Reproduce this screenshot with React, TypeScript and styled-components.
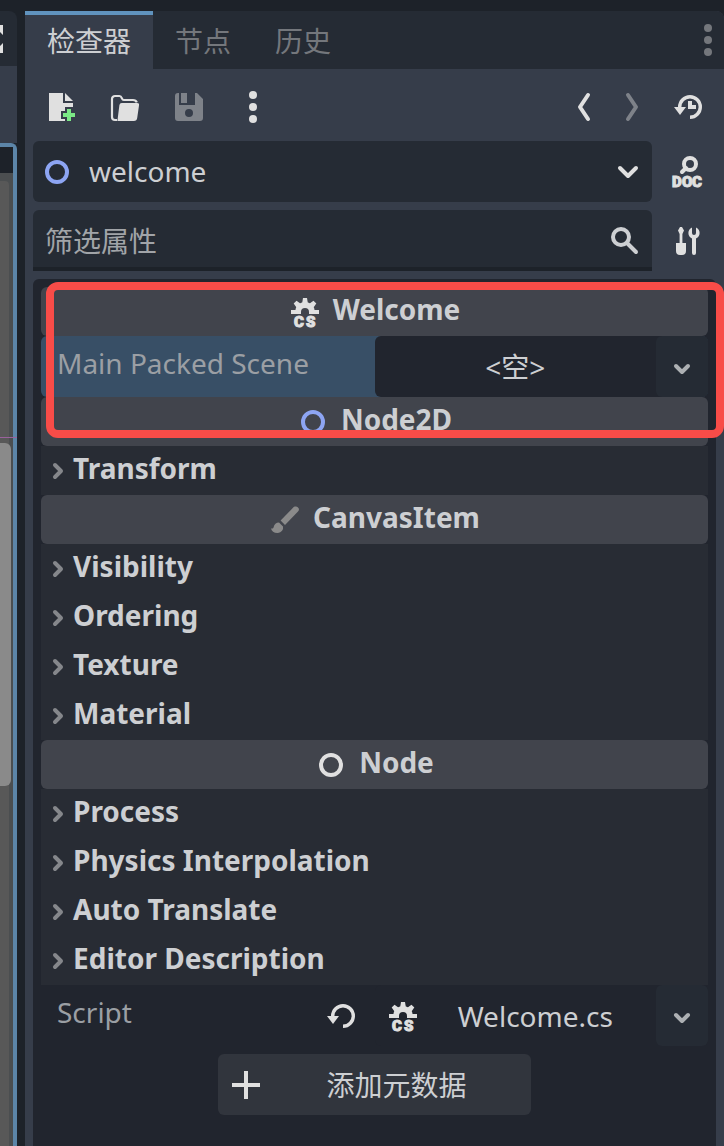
import React from "react";
import styled, { createGlobalStyle } from "styled-components";

const c = {
  base: "#1d2229",
  bar: "#252b34",
  panel: "#363d4a",
  well: "#21252e",
  section: "#282c34",
  category: "#41444c",
  accent: "#6093be",
  focus: "#5c85a8",
  picked: "#384f66",
  text: "#cdcfd2",
  muted: "#9b9fa4",
  faint: "#74777c",
  icon: "#e0e0e0",
  node2d: "#8da5f3",
  mark: "#f84c48",
};

const GlobalStyle = createGlobalStyle`
  *, *::before, *::after { box-sizing: border-box; }
  body {
    margin: 0;
    background: ${c.base};
    color: ${c.text};
    font: 400 28px/38px "Noto Sans", "Noto Sans CJK SC", sans-serif;
  }
  button, input, select {
    margin: 0;
    padding: 0;
    border: 0;
    border-radius: 0;
    outline: 0;
    background: none;
    color: inherit;
    font: inherit;
  }
  button { cursor: pointer; }
  svg { display: block; flex: none; overflow: visible; }
`;

/* ---------- page frame ---------- */

const Page = styled.div`
  display: flex;
  gap: 8px;
  min-height: 100vh;
  padding-top: 11px;
  overflow: hidden;
`;

const Strip = styled.aside`
  display: flex;
  flex: none;
  flex-direction: column;
  width: 17px;
`;

const StripHead = styled.div`
  display: flex;
  align-items: center;
  height: 55px;
  border-top-right-radius: 8px;
  background: ${c.bar};
`;

const StripTools = styled.div`
  height: 77px;
  background: ${c.panel};
`;

const Viewport = styled.div`
  position: relative;
  display: flex;
  flex: 1;
  flex-direction: column;
  border: solid ${c.focus};
  border-width: 4px 4px 0 0;
  border-top-right-radius: 6px;
  background: #4b4e50;
`;

const Ruler = styled.div`
  height: 26px;
  background: ${c.base};
`;

const Track = styled.div`
  flex: 1;
  width: 9px;
  margin-top: 8px;
  border-top-right-radius: 4px;
  background: #585858;
`;

const Thumb = styled.div`
  width: 11px;
  height: 343px;
  margin-top: 262px;
  border-radius: 0 6px 6px 0;
  background: #8a8a8a;
`;

const Guide = styled.div`
  position: absolute;
  top: 290px;
  left: 0;
  right: -4px;
  height: 1px;
  background: #9a629c;
`;

const Dock = styled.main`
  display: flex;
  flex: 1;
  flex-direction: column;
  min-width: 0;
  border-top-right-radius: 8px;
  background: ${c.panel};
`;

/* ---------- tabs and toolbar ---------- */

const TabBar = styled.div`
  display: flex;
  height: 58px;
  border-top-right-radius: 8px;
  background: ${c.bar};
`;

const Tab = styled.button<{ $active?: boolean }>`
  padding: ${(p) => (p.$active ? "0 22px 2px" : "2px 22px 0")};
  border-top: ${(p) => (p.$active ? `4px solid ${c.accent}` : "0")};
  background: ${(p) => (p.$active ? c.panel : "transparent")};
  color: ${(p) => (p.$active ? c.text : c.faint)};
`;

const Spacer = styled.div`
  flex: 1;
`;

const Body = styled.div`
  display: flex;
  flex: 1;
  flex-direction: column;
  gap: 8px;
  padding: 12px 8px 0;
`;

const Row = styled.div`
  display: flex;
  gap: 8px;
`;

const IconButton = styled.button<{ $narrow?: boolean; $bare?: boolean }>`
  display: flex;
  align-items: center;
  justify-content: center;
  flex: none;
  width: ${(p) => (p.$bare ? 32 : p.$narrow ? 40 : 56)}px;
  min-height: 52px;
  color: ${c.icon};
  &:disabled { color: #7e8289; }
`;

const Field = styled.label<{ $line?: boolean }>`
  display: flex;
  flex: 1;
  align-items: center;
  min-width: 0;
  height: 61px;
  padding: ${(p) => (p.$line ? "4px 12px 0" : "0 12px 0 8px")};
  border-bottom: ${(p) => (p.$line ? `4px solid ${c.base}` : "0")};
  border-radius: ${(p) => (p.$line ? "6px 6px 0 0" : "6px")};
  background: ${c.bar};
`;

const NodeSelect = styled.select`
  flex: 1;
  min-width: 0;
  height: 38px;
  margin: 0 0 2px 16px;
  appearance: none;
`;

const Search = styled.input`
  flex: 1;
  min-width: 0;
  height: 38px;
  &::placeholder { color: #a1a4a8; opacity: 1; }
`;

/* ---------- property list ---------- */

const Inspector = styled.section`
  position: relative;
  flex: 1;
  padding: 8px 8px 31px;
  border-radius: 6px 6px 0 0;
  background: ${c.well};
`;

const Category = styled.h2`
  display: flex;
  align-items: center;
  justify-content: center;
  gap: 12px;
  height: 49px;
  margin: 0;
  border-radius: 6px;
  background: ${c.category};
  font-size: 28px;
  font-weight: 700;
`;

const Title = styled.span`
  padding-bottom: 6px;
`;

const Section = styled.button`
  display: flex;
  align-items: center;
  gap: 4px;
  width: 100%;
  height: 49px;
  padding-left: 4px;
  background: ${c.section};
  color: ${c.text};
  font-weight: 700;
  text-align: left;
`;

const Property = styled.div<{ $picked?: boolean }>`
  display: grid;
  grid-template-columns: 1fr 1fr;
  height: 61px;
  border-radius: 6px;
  background: ${(p) => (p.$picked ? c.picked : "transparent")};
`;

const PropertyName = styled.div`
  display: flex;
  align-items: center;
  justify-content: space-between;
  padding: 0 18px 0 16px;
  color: ${c.muted};
`;

const PropertyLabel = styled.span`
  padding-bottom: 8px;
`;

const PropertyValue = styled.div`
  display: flex;
  min-width: 0;
  border-radius: 6px;
  background: ${c.well};
`;

const Resource = styled.button`
  display: flex;
  flex: 1;
  align-items: center;
  gap: 8px;
  min-width: 0;
  padding: 0 12px;
`;

const Centered = styled.span`
  flex: 1;
  text-align: center;
`;

const MoreButton = styled.button`
  display: flex;
  align-items: center;
  justify-content: center;
  width: 52px;
  padding-top: 4px;
  border-radius: 6px;
  background: ${c.bar};
  color: #adb0b3;
`;

const ResetButton = styled.button`
  color: ${c.icon};
`;

const AddButton = styled.button`
  display: flex;
  align-items: center;
  gap: 12px;
  width: 313px;
  height: 61px;
  margin: 8px auto 0;
  padding: 0 12px;
  border-radius: 6px;
  background: #31353d;
`;

const Highlight = styled.div`
  position: absolute;
  top: 3px;
  left: 13px;
  right: -8px;
  height: 156px;
  border: 8px solid ${c.mark};
  border-radius: 12px;
  pointer-events: none;
`;

/* ---------- icons, drawn on a 16 unit grid ---------- */

type IconProps = { children: React.ReactNode; color?: string };

const Icon = ({ children, color = "currentColor" }: IconProps) => (
  <svg width="32" height="32" viewBox="0 0 16 16" fill={color} aria-hidden="true">
    {children}
  </svg>
);

const NewIcon = () => (
  <Icon>
    <path d="M2 1v14h8v-1H8v-4h2V8h4V6H9V1zm8 0v4h4z" />
    <path fill="#7be986" d="M11 9v2H9v2h2v2h2v-2h2v-2h-2V9z" />
  </Icon>
);

const LoadIcon = () => (
  <Icon>
    <path
      d="M4 14.5H3A1.5 1.5 0 0 1 1.5 13V4A1.5 1.5 0 0 1 3 2.5h2.2c1.5 0 .9 2 2.2 2H12c1 0 1.6.4 1.9 1.2"
      fill="none"
      stroke="currentColor"
      strokeWidth="1.1"
    />
    <path d="M6.4 6H14a1 1 0 0 1 1 1.2l-.9 6.300A1.7 1.7 0 0 1 12.400 15H4.200L5.200 7a1.2 1.2 0 0 1 1.200-1z" />
  </Icon>
);

const SaveIcon = () => (
  <Icon>
    <path
      fillRule="evenodd"
      d="M2.500 1H3v6h8V1h1l3 3v9.500a1.500 1.500 0 0 1-1.500 1.500h-11A1.500 1.500 0 0 1 1 13.500v-11A1.500 1.500 0 0 1 2.500 1zM4 1h3v5H4zm4 8a2 2 0 0 0 0 4 2 2 0 0 0 0-4z"
    />
  </Icon>
);

const DotsIcon = ({ color }: { color?: string }) => (
  <Icon color={color}>
    <circle cx="8" cy="2" r="2" />
    <circle cx="8" cy="8" r="2" />
    <circle cx="8" cy="14" r="2" />
  </Icon>
);

const ArrowIcon = ({ forward }: { forward?: boolean }) => (
  <svg width="16" height="32" viewBox="0 0 16 32" fill="none" stroke="currentColor" strokeWidth="4" strokeLinecap="round" strokeLinejoin="round" aria-hidden="true">
    <path d={forward ? "M4 4l8 12-8 12" : "M12 4L4 16l8 12"} />
  </svg>
);

const REWIND = "M9 2a6 6 0 0 0-6 6H1l3 4 3-4H4.700A4.300 4.300 0 1 1 9 12.300V14A6 6 0 0 0 9 2z";

const HistoryIcon = () => (
  <Icon>
    <path d={REWIND} />
    <path d="M8 5v4h4V7h-2V5z" />
  </Icon>
);

const ResetIcon = () => (
  <Icon>
    <path d={REWIND} />
  </Icon>
);

const RingIcon = ({ color }: { color: string }) => (
  <Icon color="none">
    <circle cx="8" cy="8" r="5" stroke={color} strokeWidth="2" />
  </Icon>
);

const IconLetters = styled.text`
  font: 900 15px/1 Roboto, sans-serif;
  stroke: currentColor;
  stroke-width: 1px;
`;

const DocIcon = () => (
  <svg width="32" height="34" viewBox="0 0 32 34" fill="currentColor" aria-hidden="true">
    <path d="M14 13l-4 4" stroke="currentColor" strokeWidth="4" strokeLinecap="round" />
    <circle cx="18" cy="9" r="6" fill="none" stroke="currentColor" strokeWidth="4" />
    <IconLetters x="0 10 20" y="32">DOC</IconLetters>
  </svg>
);

const ToolsIcon = () => (
  <Icon>
    <path d="M4 1h1l1 1.800L5.200 4.500V9H7v4a2 2 0 0 1-2 2H4a2 2 0 0 1-2-2V9h1.800V4.500L3 2.800z" />
    <path d="M10 1.200V4a1 1 0 0 0 2 0V1.200A3 3 0 0 1 12 6.700V14a1 1 0 0 1-2 0V6.700a3 3 0 0 1 0-5.500z" />
  </Icon>
);

const SearchIcon = () => (
  <Icon color="none">
    <circle cx="6.500" cy="6" r="4" stroke={c.text} strokeWidth="2" />
    <path d="M9.500 9l4.500 4.500" stroke={c.text} strokeWidth="2" strokeLinecap="round" />
  </Icon>
);

const ScriptIcon = () => (
  <svg width="32" height="32" viewBox="0 0 32 32" fill={c.icon} color={c.icon} aria-hidden="true">
    <path d="M6 18v-2a10 10 0 0 1 20 0v2h-6v-2a4 4 0 0 0-8 0v2z" />
    <path d="M2 14h6v4H2zM24 14h6v4h-6z" />
    <path d="M13 8l1-6h4l1 6z" />
    <path d="M13 8l1-6h4l1 6z" transform="rotate(-45 16 16)" />
    <path d="M13 8l1-6h4l1 6z" transform="rotate(45 16 16)" />
    <IconLetters x="5 17" y="31">CS</IconLetters>
  </svg>
);

const BrushIcon = () => (
  <Icon color="#8a8a8a">
    <path d="M13 1.300a1.500 1.500 0 0 1 1.500 2.500L8 10.500 5.800 8.300l6.300-6.500a1.500 1.500 0 0 1 .9-.5z" />
    <path d="M5 9.200l2 2a2.700 2.700 0 0 1-2.500 3.300C2.500 14.600 1.300 13.500 1 12.200c.7.200 1.200 0 1.300-.6.300-1.500 1.300-2.400 2.700-2.400z" />
  </Icon>
);

const PlusIcon = () => (
  <Icon color={c.icon}>
    <path d="M7 1h2v6h6v2H9v6H7V9H1V7h6z" />
  </Icon>
);

const ChevronRight = () => (
  <svg width="24" height="24" viewBox="0 0 24 24" fill="none" stroke="#85878b" strokeWidth="4" strokeLinecap="round" strokeLinejoin="round" aria-hidden="true">
    <path d="M10 6l6 6-6 6" />
  </svg>
);

const ChevronDown = ({ wide }: { wide?: boolean }) => (
  <svg width="24" height="24" viewBox="0 0 24 24" fill="none" stroke={wide ? c.icon : "currentColor"} strokeWidth="4" strokeLinecap="round" strokeLinejoin="round" aria-hidden="true">
    <path d={wide ? "M4 8l8 8 8-8" : "M6 9l6 6 6-6"} />
  </svg>
);

const ExpandIcon = () => (
  <svg width="4" height="28" viewBox="0 0 4 28" fill={c.icon} aria-hidden="true">
    <path d="M0 0h3v10L0 7zM0 21l3-3v10H0z" />
  </svg>
);

/* ---------- screen ---------- */

const Sections = ({ names }: { names: string[] }) => (
  <>
    {names.map((name) => (
      <Section key={name} type="button" aria-expanded={false}>
        <ChevronRight />
        <Title>{name}</Title>
      </Section>
    ))}
  </>
);

const Heading = ({ icon, title }: { icon: React.ReactNode; title: string }) => (
  <Category>
    {icon}
    <Title>{title}</Title>
  </Category>
);

export default function App() {
  return (
    <>
      <GlobalStyle />
      <Page>
        <Strip>
          <StripHead>
            <button type="button" aria-label="Expand">
              <ExpandIcon />
            </button>
          </StripHead>
          <StripTools />
          <Viewport>
            <Ruler />
            <Track>
              <Thumb />
            </Track>
            <Guide />
          </Viewport>
        </Strip>

        <Dock>
          <TabBar role="tablist">
            <Tab type="button" role="tab" aria-selected $active>检查器</Tab>
            <Tab type="button" role="tab" aria-selected={false}>节点</Tab>
            <Tab type="button" role="tab" aria-selected={false}>历史</Tab>
            <Spacer />
            <IconButton type="button" $bare aria-label="Dock menu">
              <DotsIcon color={c.faint} />
            </IconButton>
          </TabBar>

          <Body>
            <Row>
              <IconButton type="button" aria-label="New resource"><NewIcon /></IconButton>
              <IconButton type="button" aria-label="Load resource"><LoadIcon /></IconButton>
              <IconButton type="button" aria-label="Save resource" disabled><SaveIcon /></IconButton>
              <IconButton type="button" aria-label="More options"><DotsIcon /></IconButton>
              <Spacer />
              <IconButton type="button" $narrow aria-label="Back"><ArrowIcon /></IconButton>
              <IconButton type="button" $narrow aria-label="Forward" disabled><ArrowIcon forward /></IconButton>
              <IconButton type="button" aria-label="History"><HistoryIcon /></IconButton>
            </Row>

            <Row>
              <Field>
                <RingIcon color={c.node2d} />
                <NodeSelect aria-label="Node" defaultValue="welcome">
                  <option value="welcome">welcome</option>
                </NodeSelect>
                <ChevronDown wide />
              </Field>
              <IconButton type="button" aria-label="Open documentation"><DocIcon /></IconButton>
            </Row>

            <Row>
              <Field $line>
                <Search type="text" placeholder="筛选属性" aria-label="筛选属性" />
                <SearchIcon />
              </Field>
              <IconButton type="button" aria-label="Property tools"><ToolsIcon /></IconButton>
            </Row>

            <Inspector>
              <Heading icon={<ScriptIcon />} title="Welcome" />
              <Property $picked>
                <PropertyName>
                  <PropertyLabel>Main Packed Scene</PropertyLabel>
                </PropertyName>
                <PropertyValue>
                  <Resource type="button">
                    <Centered>&lt;空&gt;</Centered>
                  </Resource>
                  <MoreButton type="button" aria-label="Scene options"><ChevronDown /></MoreButton>
                </PropertyValue>
              </Property>

              <Heading icon={<RingIcon color={c.node2d} />} title="Node2D" />
              <Sections names={["Transform"]} />

              <Heading icon={<BrushIcon />} title="CanvasItem" />
              <Sections names={["Visibility", "Ordering", "Texture", "Material"]} />

              <Heading icon={<RingIcon color={c.icon} />} title="Node" />
              <Sections names={["Process", "Physics Interpolation", "Auto Translate", "Editor Description"]} />

              <Property>
                <PropertyName>
                  <PropertyLabel>Script</PropertyLabel>
                  <ResetButton type="button" aria-label="Reset"><ResetIcon /></ResetButton>
                </PropertyName>
                <PropertyValue>
                  <Resource type="button">
                    <ScriptIcon />
                    <Centered>Welcome.cs</Centered>
                  </Resource>
                  <MoreButton type="button" aria-label="Script options"><ChevronDown /></MoreButton>
                </PropertyValue>
              </Property>

              <AddButton type="button">
                <PlusIcon />
                <Centered>添加元数据</Centered>
              </AddButton>
              <Highlight />
            </Inspector>
          </Body>
        </Dock>
      </Page>
    </>
  );
}
